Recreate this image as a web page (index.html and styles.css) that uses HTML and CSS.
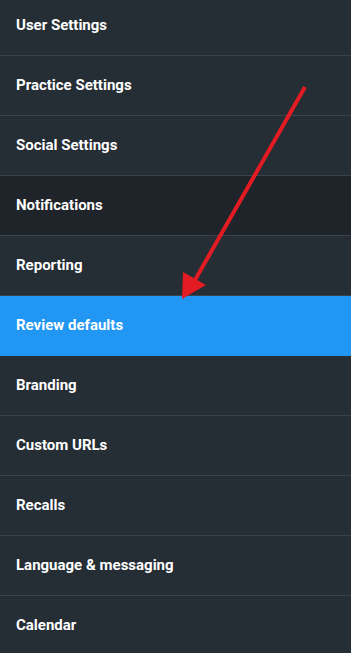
FILE: index.html
```html
<!DOCTYPE html>
<html>
  <head>
    <meta charset='utf-8'>
    <title>Settings</title>
    <link rel="stylesheet" href="styles.css">
  </head>
  <body>
    <div id='menu'>
      <div class='item'>User Settings</div>
      <div class='item'>Practice Settings</div>
      <div class='item'>Social Settings</div>
      <div class='item dim'>Notifications</div>
      <div class='item'>Reporting</div>
      <div class='item active'>Review defaults</div>
      <div class='item'>Branding</div>
      <div class='item'>Custom URLs</div>
      <div class='item'>Recalls</div>
      <div class='item'>Language &amp; messaging</div>
      <div class='item'>Calendar</div>
    </div>
    <svg id='arrow' width='351' height='653' viewBox='0 0 351 653'>
      <line x1='305' y1='87' x2='195' y2='280' stroke='#e31b23' stroke-width='4' />
      <polygon points='182,299 183,272 206,285' fill='#e31b23' />
    </svg>
  </body>
</html>
```

FILE: styles.css
```css
body {
  margin: 0;
  background: #252d35;
  font-family: Roboto, "Liberation Sans", sans-serif;
  overflow: hidden;
}

#menu {
  margin-top: -4px;
}

.item {
  height: 59px;
  line-height: 58px;
  padding-left: 16px;
  border-bottom: 1px solid #3a434c;
  color: #fff;
  font-size: 15px;
  font-weight: bold;
}

.dim {
  background: #1f242a;
}

.active {
  background: #2196f3;
  border-bottom-color: #2196f3;
}

#arrow {
  position: absolute;
  top: 0;
  left: 0;
}
```
